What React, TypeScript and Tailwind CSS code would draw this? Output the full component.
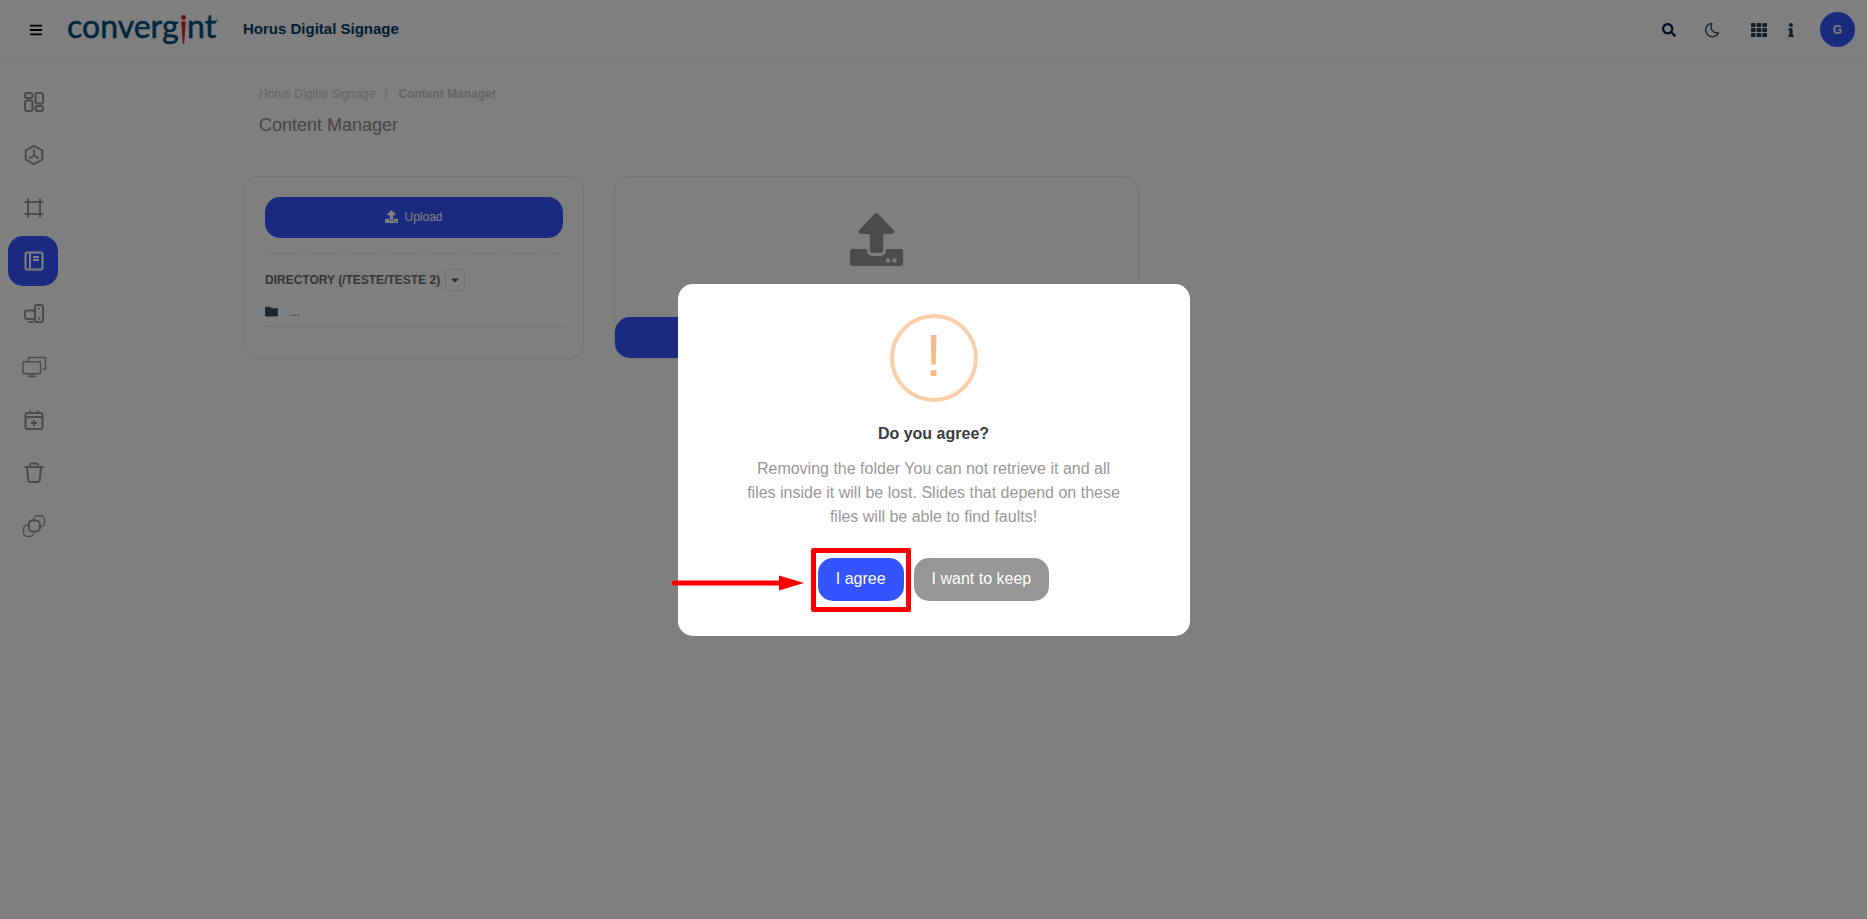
import React from "react";
import { FaBars, FaSearch, FaFolder, FaCaretDown, FaTh, FaInfo } from "react-icons/fa";

function UploadIcon({ className }: { className?: string }) {
  return (
    <svg viewBox="0 0 53 53" className={className} fill="currentColor" aria-hidden="true">
      <path d="M24.6 .9c1-1.100 2.600-1.100 3.600 0l15.400 16.200c1.400 1.500.7 3.900-1.600 3.900H33.200v16.500a2.200 2.200 0 0 1-2.200 2.200h-9a2.200 2.200 0 0 1-2.200-2.200V21H11c-2.300 0-3.200-2.400-1.800-3.900z" />
      <path
        fillRule="evenodd"
        d="M2.500 36H17v1.500c0 3 2.400 5.500 5.500 5.500h8c3 0 5.500-2.500 5.500-5.500V36h14.500A2.500 2.500 0 0 1 53 38.500v12a2.500 2.500 0 0 1-2.500 2.500h-48A2.500 2.500 0 0 1 0 50.500v-12A2.500 2.500 0 0 1 2.500 36zM38 45.300a2.200 2.200 0 1 0 0 4.400 2.200 2.200 0 0 0 0-4.400zM44.500 45.300a2.200 2.200 0 1 0 0 4.400 2.200 2.200 0 0 0 0-4.400z"
      />
    </svg>
  );
}

function Logo() {
  return (
    <svg viewBox="0 0 150 48" className="h-12 w-[150px] overflow-visible" role="img" aria-label="convergint">
      <g fill="#004c7e" stroke="#004c7e" strokeWidth="0.500" fontFamily="Lato, sans-serif" fontSize="32">
        <text x="-1" y="32">converg</text>
        <text x="119" y="32">nt</text>
      </g>
      <circle cx="115.500" cy="11.500" r="2.400" fill="#d8232a" />
      <path d="M113.300 15.500h4.400l-1.500 22.500h-1.400z" fill="#d8232a" />
      <circle cx="148.500" cy="14.500" r="1.200" fill="#6c93ad" />
    </svg>
  );
}

const drawings: { label: string; art: React.ReactNode }[] = [
  {
    label: "Dashboard",
    art: (
      <>
        <rect x="3" y="3" width="7.500" height="5" rx="2" />
        <rect x="3" y="10.500" width="7.500" height="10.500" rx="2" />
        <rect x="13.500" y="3" width="7.500" height="10.500" rx="2" />
        <rect x="13.500" y="16" width="7.500" height="5" rx="2" />
      </>
    ),
  },
  {
    label: "Widgets",
    art: (
      <>
        <path d="M12 2.800 20.300 7.500v9L12 21.200 3.700 16.500v-9z" />
        <path d="M12 6.500V12.500l4.800 2.900M12 12.500l-4.800 2.900" />
      </>
    ),
  },
  { label: "Layouts", art: <path d="M6 2.500v19M18 2.500v19M2.500 6h19M2.500 18h19" /> },
  {
    label: "Content Manager",
    art: (
      <>
        <rect x="3.500" y="3.500" width="17" height="17" rx="1.800" />
        <path d="M8 3.500v17M11 8h6M11 11h6" />
      </>
    ),
  },
  {
    label: "Devices",
    art: (
      <>
        <rect x="13" y="3" width="8" height="17" rx="1.800" />
        <path d="M13 8.500H5a2 2 0 0 0-2 2v4.500a2 2 0 0 0 2 2h8M6.500 20h5M16 16.500h2.500M17 6v1.500" />
      </>
    ),
  },
  {
    label: "Screens",
    art: (
      <g strokeWidth="1.400">
        <rect x="1" y="6.800" width="17.500" height="12" rx=".6" />
        <path d="M6.500 6.500V2.500h17V14h-3M8.500 19v2.500M11.500 19v2.500M6 21.500h8" />
      </g>
    ),
  },
  {
    label: "Schedule",
    art: (
      <>
        <rect x="3.500" y="5" width="17" height="16" rx="1.800" />
        <path d="M3.500 9h17M8 2.500V5M16 2.500V5M12 12v6M9 15h6" />
      </>
    ),
  },
  {
    label: "Trash",
    art: (
      <path d="M2.500 6h19M8 6V3.800A1.500 1.500 0 0 1 9.500 2.500h5A1.500 1.500 0 0 1 16 3.800V6M5 6l1.200 12.800A2.500 2.500 0 0 0 8.700 21h6.600a2.500 2.500 0 0 0 2.500-2.200L19 6" />
    ),
  },
  {
    label: "Integrations",
    art: (
      <>
        <g strokeWidth="1.400">
          <path d="M11.500 6.500v-.8a4 4 0 0 1 4-4h3a4 4 0 0 1 4 4v3a4 4 0 0 1-4 4h-1" />
          <path d="M7 11H5.500a4 4 0 0 0-4 4v3.500a4 4 0 0 0 4 4H8a4 4 0 0 0 4-4V18" />
        </g>
        <rect x="6.800" y="6.500" width="11" height="11" rx="3.500" />
      </>
    ),
  },
];

function Sidebar() {
  return (
    <nav aria-label="Main" className="flex w-[66px] shrink-0 flex-col items-center gap-[3px] pt-[17px]">
      {drawings.map((item) => (
        <a
          key={item.label}
          href="#"
          aria-label={item.label}
          className={
            item.label === "Content Manager"
              ? "flex size-[50px] items-center justify-center rounded-[15px] bg-[#3454ff] pl-[2px] text-white"
              : "flex size-[50px] items-center justify-center rounded-[15px] pl-[2px] text-[#949494]"
          }
        >
          <svg
            viewBox="0 0 24 24"
            className="size-6 overflow-visible"
            fill="none"
            stroke="currentColor"
            strokeWidth="2"
            aria-hidden="true"
          >
            {item.art}
          </svg>
        </a>
      ))}
    </nav>
  );
}

function Header() {
  return (
    <header className="flex h-[60px] items-center border-b border-[#eee] pr-3 pl-[29px]">
      <button type="button" aria-label="Toggle menu" className="text-black">
        <FaBars className="size-[14px]" />
      </button>
      <div className="ml-[25px]">
        <Logo />
      </div>
      <span className="ml-[25px] text-[15px] font-bold text-[#003b66]">Horus Digital Signage</span>
      <div className="ml-auto flex items-center text-[#2b3a4a]">
        <button type="button" aria-label="Search" className="mr-[28px] text-[#0c1c4c]">
          <FaSearch className="size-[14px]" />
        </button>
        <button type="button" aria-label="Dark mode" className="mr-[31px]">
          <svg viewBox="0 0 16 16" className="size-4" fill="none" stroke="currentColor" strokeWidth="1.300" aria-hidden="true">
            <path d="M7.800 1.300a6.700 6.700 0 1 0 6.700 9.500h-1.700A5.800 5.800 0 0 1 7.500 2.800z" strokeLinejoin="round" />
          </svg>
        </button>
        <button type="button" aria-label="Applications" className="mr-[17px]">
          <FaTh className="size-4" />
        </button>
        <button type="button" aria-label="Information" className="mr-[22px]">
          <FaInfo className="size-[14px]" />
        </button>
        <button
          type="button"
          aria-label="Account G"
          className="flex size-[35px] items-center justify-center rounded-full bg-[#3454ff] text-[12px] font-bold text-white"
        >
          G
        </button>
      </div>
    </header>
  );
}

function Dialog() {
  return (
    <div className="fixed inset-0 flex items-center justify-center bg-black/50">
      <section
        role="dialog"
        aria-modal="true"
        aria-labelledby="dialog-title"
        className="flex w-[512px] flex-col items-center rounded-[15px] bg-white px-[66px] pt-[30px] pb-[35px]"
      >
        <div className="flex size-[88px] items-center justify-center rounded-full border-4 border-[#facea8] pb-1 text-[60px] leading-none text-[#f8bb86]">
          !
        </div>
        <h2 id="dialog-title" className="mt-5 text-[16px] leading-6 font-bold text-[#3c3c3c]">
          Do you agree?
        </h2>
        <p className="mt-[11px] text-center text-[16px] leading-6 text-[#999]">
          Removing the folder You can not retrieve it and all files inside it will be lost. Slides that depend on these
          files will be able to find faults!
        </p>
        <div className="mt-[29px] flex gap-[10px]">
          <div className="relative">
            <button type="button" className="h-[43px] rounded-[15px] bg-[#3454ff] px-[18px] text-[16px] text-white">
              I agree
            </button>
            <div className="pointer-events-none absolute -inset-x-[7px] -top-[10px] -bottom-[11px] rounded-[2px] border-[5px] border-[#f00]" />
            <svg
              viewBox="0 0 132 16"
              className="pointer-events-none absolute top-[17px] right-full mr-[14px] h-4 w-[132px]"
              fill="#f00"
              aria-hidden="true"
            >
              <path d="M2.500 5.500H107V.5l25 7.500-25 7.500v-5H2.500a2.500 2.500 0 0 1 0-5z" />
            </svg>
          </div>
          <button type="button" className="h-[43px] rounded-[15px] bg-[#969696] px-[18px] text-[16px] text-white">
            I want to keep
          </button>
        </div>
      </section>
    </div>
  );
}

export default function App() {
  return (
    <div className="min-h-screen bg-white font-['Liberation_Sans',Arial,sans-serif]">
      <Header />
      <div className="flex">
        <Sidebar />
        <main className="ml-[178px] flex-1 pt-[26px]">
          <div className="pl-[15px]">
            <nav aria-label="Breadcrumb" className="flex text-[12px] leading-4 text-[#c8c8c8]">
              <a href="#">Horus Digital Signage</a>
              <span className="mx-[9px]">/</span>
              <b className="ml-[2px]">Content Manager</b>
            </nav>
            <h1 className="mt-[11px] text-[18px] leading-6 text-[#8c8c8c]">Content Manager</h1>
          </div>
          <div className="mt-[39px] flex items-start gap-[30px]">
            <section className="w-[340px] rounded-[15px] border border-[#e6e6e6] px-5 pt-5 pb-[31px]">
              <button
                type="button"
                className="flex h-[41px] w-full items-center justify-center gap-[6px] rounded-[15px] bg-[#3454ff] pb-[2px] text-[12px] text-white"
              >
                <UploadIcon className="size-[13px]" />
                Upload
              </button>
              <hr className="mt-[15px] border-dashed border-[#e6e6e6]" />
              <div className="mt-[15px] flex items-center gap-[5px]">
                <h2 className="text-[12px] font-bold text-[#6a6a6a]">DIRECTORY (/TESTE/TESTE 2)</h2>
                <button
                  type="button"
                  aria-label="Directory options"
                  className="flex h-[22px] w-5 items-center justify-center rounded-[3px] border border-[#e6e6e6] text-[#555]"
                >
                  <FaCaretDown className="size-3" />
                </button>
              </div>
              <a
                href="#"
                aria-label="Parent folder"
                className="mt-3 flex h-[24px] items-center gap-3 border-b border-[#e6e6e6] pb-[6px] text-[12px] text-[#666]"
              >
                <FaFolder className="size-[13px] text-[#3a4d5c]" />
                ...
              </a>
            </section>
            <section className="flex w-[525px] flex-col items-center rounded-[15px] border border-[#e6e6e6] pt-9">
              <UploadIcon className="size-[53px] text-[#999]" />
              <button
                type="button"
                aria-label="Send files"
                className="mt-[51px] h-[41px] w-full rounded-[15px] bg-[#3454ff]"
              />
            </section>
          </div>
        </main>
      </div>
      <Dialog />
    </div>
  );
}
